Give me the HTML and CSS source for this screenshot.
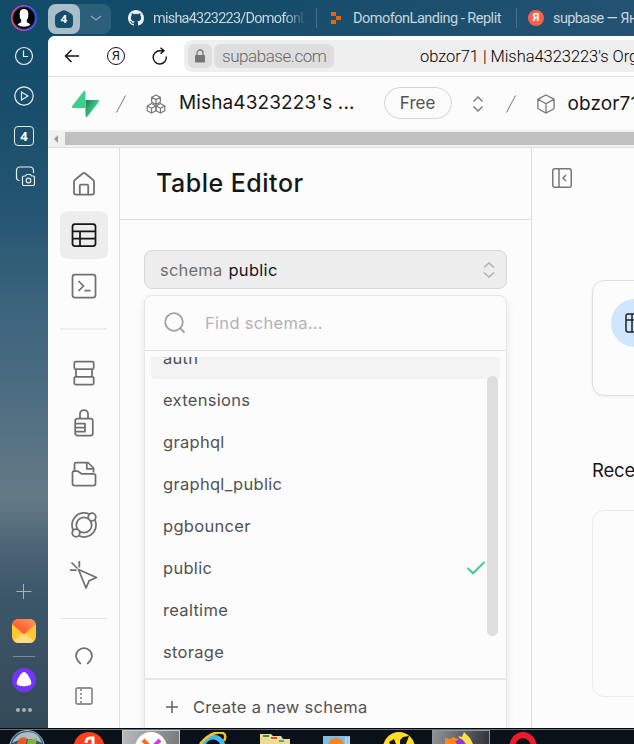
FILE: index.html
```html
<!DOCTYPE html>
<html lang="en">
<head>
<meta charset="utf-8">
<title>obzor71 | Supabase</title>
<link rel="stylesheet" href="styles.css">
</head>
<body>
<div class="browser">
  <aside class="rail">
    <svg class="avatar" width="26" height="26" viewBox="0 0 26 26">
      <defs><linearGradient id="ring"><stop offset="0" stop-color="#f8485f"/><stop offset=".55" stop-color="#a34be0"/><stop offset="1" stop-color="#4a51f5"/></linearGradient></defs>
      <circle cx="13" cy="13" r="12.2" fill="#0b2d4b" stroke="url(#ring)" stroke-width="1.5"/>
      <circle cx="13" cy="13" r="10.3" fill="#000"/>
      <path d="M8.700 8c0-5.500 8.600-5.500 8.600 0v3c0 2-1 3-1.500 4v2c1 1 3 1.300 3.500 2.500-3 3-9.600 3-12.600 0 .5-1.200 2.500-1.500 3.500-2.500v-2C9.700 14 8.700 13 8.700 11z" fill="#fff"/>
    </svg>
    <svg class="r-clock" width="20" height="20" viewBox="0 0 20 20"><circle cx="10" cy="10" r="8.500"/><path d="M9.500 4.500v6h4.500"/></svg>
    <svg class="r-play" width="20" height="20" viewBox="0 0 20 20"><circle cx="10" cy="10" r="9.200"/><path d="M7.500 6v8l6.500-4z"/></svg>
    <div class="r-count">4</div>
    <svg class="r-shot" width="20" height="20" viewBox="0 0 20 20"><path d="M4.500 14.500C2 14.500 1.500 13 1.500 11V5C1.500 2 2.500 1 5 1h10c2.500 0 3.500 1 3.500 4v2"/><path d="M9 10h1.500l1-1.500h4l1 1.500H18c1 0 1.500.5 1.500 1.500V18c0 1-.5 1.500-1.500 1.500H9c-1 0-1.500-.5-1.500-1.500v-6.500C7.500 10.500 8 10 9 10z"/><circle cx="13.500" cy="14.500" r="2.300"/></svg>
    <svg class="r-plus" width="16" height="16" viewBox="0 0 16 16"><path d="M.5 8.500h15M7.500 1v15"/></svg>
    <svg class="r-mail" width="24" height="24" viewBox="0 0 24 24">
      <defs><linearGradient id="m" x1="0" y1="1" x2="1" y2="0"><stop offset="0" stop-color="#ff4316"/><stop offset="1" stop-color="#ff9a62"/></linearGradient><clipPath id="mc"><rect width="24" height="24" rx="6.500"/></clipPath></defs>
      <g clip-path="url(#mc)"><path d="M0 0h24v24H0z" fill="#ffc936"/><path d="M0 24 12 13l12 11z" fill="#ffdc7c"/><path d="M0 0h24v5L12 15.500 0 5z" fill="url(#m)"/></g>
    </svg>
    <div class="r-line"></div>
    <svg class="r-alice" width="24" height="24" viewBox="0 0 24 24"><circle cx="12" cy="12" r="12" fill="#7435fb"/><path d="M12 4c2.700 0 7.300 7.500 7.300 11 0 2.700-4.300 3.200-7.300 3.200S4.700 17.700 4.700 15C4.700 11.500 9.300 4 12 4z" fill="#fff"/></svg>
    <svg class="r-dots" width="16" height="4" viewBox="0 0 16 4"><circle cx="2" cy="2" r="2"/><circle cx="8" cy="2" r="2"/><circle cx="14" cy="2" r="2"/></svg>
  </aside>

  <div class="window">
    <header class="tabs">
      <div class="group"><div class="group-on"><svg width="18" height="18" viewBox="0 0 18 18"><path d="M7 .8Q9-.4 11 .8l4.500 2.400Q18 4.500 18 7v6.500Q18 18 13.500 18h-9Q0 18 0 13.500V7Q0 4.500 2.500 3.200z" fill="#154e6a"/></svg><b>4</b></div>
        <svg class="chev" width="12" height="7" viewBox="0 0 12 7"><path d="M1 1l5 4 5-4"/></svg></div>
      <svg class="gh" width="16" height="16" viewBox="0 0 16 16"><path fill="#edf1f3" d="M8 0C3.580 0 0 3.580 0 8c0 3.540 2.290 6.530 5.470 7.590.4.070.55-.17.55-.38 0-.19-.01-.82-.01-1.490-2.010.37-2.530-.49-2.690-.94-.09-.23-.48-.94-.82-1.130-.28-.15-.68-.52-.01-.53.63-.01 1.080.58 1.230.82.72 1.210 1.870.87 2.330.66.070-.52.28-.87.51-1.070-1.780-.2-3.640-.89-3.640-3.950 0-.87.31-1.590.82-2.150-.08-.2-.36-1.020.08-2.120 0 0 .67-.21 2.200.82a7.600 7.600 0 0 1 4 0c1.530-1.040 2.200-.82 2.200-.82.44 1.100.16 1.920.08 2.120.51.56.82 1.270.82 2.150 0 3.070-1.870 3.750-3.650 3.950.29.25.54.73.54 1.480 0 1.070-.01 1.930-.01 2.200 0 .21.15.46.55.38A8 8 0 0 0 16 8c0-4.420-3.580-8-8-8z"/></svg>
      <span class="tab t1">misha4323223/DomofonL</span>
      <i class="sep"></i>
      <svg class="replit" width="10" height="12" viewBox="0 0 10 12"><path fill="#f26207" d="M0 0h5v4H0zM5 4h5v4H5zM0 8h5v4H0z"/></svg>
      <span class="tab t2">DomofonLanding - Replit</span>
      <i class="sep"></i>
      <span class="ya">Я</span>
      <span class="tab t3">supbase — Ян</span>
    </header>

    <div class="page">
      <div class="toolbar">
        <svg class="back" width="16" height="14" viewBox="0 0 16 14"><path d="M15 7H1.500M7.500 1l-6 6 6 6"/></svg>
        <span class="ya-o">Я</span>
        <svg class="reload" width="16" height="18" viewBox="0 0 16 18"><path d="M14.300 9.500A6.600 6.600 0 1 1 8 3.800h4M8.500.8l3.500 3-3.500 3"/></svg>
        <div class="address">
          <span class="lock"><svg width="12" height="14" viewBox="0 0 12 14"><rect x="1" y="6" width="10" height="7.500" rx="1.200" fill="#777"/><path d="M3 6V4a3 3 0 0 1 6 0v2" fill="none" stroke="#777" stroke-width="1.300"/></svg></span>
          <span class="host">supabase.com</span>
          <span class="doc">obzor71 | Misha4323223's Org</span>
        </div>
      </div>

      <div class="crumbs">
        <svg class="logo" width="27" height="28" viewBox="0 0 27 28"><defs><linearGradient id="lg" x1="0" y1="0" x2="1" y2=".7"><stop offset="0" stop-color="#1f7950"/><stop offset=".7" stop-color="#3ecf8e"/></linearGradient></defs><path fill="url(#lg)" d="M13.500 10H25.500c1.300 0 2 1.200 1.100 2.200L15.500 26.500c-.7.900-2 .4-2-.8z"/><path fill="#3ecf8e" d="M13.500 18H1.500C.2 18-.4 16.800.4 15.800L11.600 1.300c.7-.9 1.900-.4 1.900.7z"/></svg>
        <svg class="slash" width="10" height="18" viewBox="0 0 10 18"><path d="M9.500.5.500 17.500"/></svg>
        <svg class="boxes" width="20" height="20" viewBox="1 1 22 22"><path id="cube" d="M12 2l4.800 2.600v5.300L12 12.500 7.200 9.900V4.600zM7.200 4.600 12 7.200l4.800-2.600M12 7.200v5.300"/><use href="#cube" x="-4.900" y="9.500"/><use href="#cube" x="4.900" y="9.500"/></svg>
        <span class="org">Misha4323223's ...</span>
        <span class="plan">Free</span>
        <svg class="updown" width="12" height="16" viewBox="0 0 12 16"><path d="M1.500 5.500 6 1l4.500 4.500M1.500 10.500 6 15l4.500-4.500"/></svg>
        <svg class="slash s2" width="10" height="18" viewBox="0 0 10 18"><path d="M9.500.5.500 17.500"/></svg>
        <svg class="box" width="18" height="20" viewBox="0 0 18 20"><path d="M9 1l7.500 3.800q.6.400.6 1v8q0 .8-.6 1.200L9 19l-7.500-4q-.6-.4-.6-1.200v-8q0-.6.6-1zM1.200 5.300 9 9.700l7.800-4.400M9 9.700V19"/></svg>
        <span class="proj">obzor71</span>
      </div>
      <div class="hscroll"><i class="arrow"></i><i class="thumb"></i></div>

      <div class="studio">
        <nav class="nav">
          <a><svg width="24" height="24" viewBox="0 0 24 24"><path d="M4 22.500q-2 0-2-2V9.500Q2 8.500 3 7.800L11 1.300q1-.7 2 0l8 6.500q1 .7 1 1.700V20.500q0 2-2 2zM7.800 22.500v-9q0-1 1-1h6.400q1 0 1 1v9"/></svg></a>
          <a class="on"><svg width="26" height="24" viewBox="0 0 26 24"><rect x="1.500" y="1" width="23" height="22" rx="2.500"/><path d="M1.500 8.300h23M1.500 15.500h23M9 8.300V23"/></svg></a>
          <a><svg width="26" height="26" viewBox="0 0 26 26"><rect x="1.500" y="1.500" width="23" height="23" rx="2.500"/><path d="M7.500 8l5 5-5 5M13.500 17.500h6"/></svg></a>
          <hr class="thick">
          <a><svg width="22" height="26" viewBox="0 0 22 26"><rect x="1.300" y="1.500" width="19.400" height="7.700" rx="1.500"/><rect x="1.300" y="16.800" width="19.400" height="7.700" rx="1.500"/><path d="M3 9.200v7.600M19 9.200v7.600"/></svg></a>
          <a><svg width="20" height="28" viewBox="0 0 20 28"><path d="M6 9.500V5a4 4 0 0 1 8 0v4.500"/><rect x="1.200" y="9.500" width="17.600" height="17" rx="2.300"/><path d="M1.200 14.500H11v8.200H1.200M1.200 18.600H11"/></svg></a>
          <a><svg width="26" height="26" viewBox="0 0 26 26"><path d="M3.500 10V3q0-1.500 1.500-1.500h12l5.500 5.500v4.500M15.800 1.500v6.300h6.700"/><path d="M3 10h3.500l4 2.800H22.500q2 0 2 2V22.500q0 2-2 2H3.500q-2 0-2-2V11.500q0-1.500 1.500-1.500z"/></svg></a>
          <a><svg width="28" height="28" viewBox="0 0 28 28"><circle cx="14" cy="14" r="12"/><circle cx="14" cy="14" r="7.700"/><circle cx="22" cy="6" r="3.800" class="bg"/><circle cx="6" cy="22" r="3.800" class="bg"/></svg></a>
          <a><svg width="28" height="28" viewBox="0 0 28 28"><path d="M8.500 8.500 26.500 16.500l-7.300 3.200L16 27zM9.300 0v6.500M0 9.200h6.500M1.500 1.500l6 6"/></svg></a>
          <hr>
          <a class="sm"><svg width="18" height="18" viewBox="0 0 18 18"><path d="M5.800 17C.5 12.500-.3 7.500 3.200 3.700 6.500.2 11.500.2 14.800 3.700c3.500 3.800 2.700 8.800-2.600 13.300"/></svg></a>
          <a class="sm"><svg class="thin" width="18" height="18" viewBox="0 0 18 18"><rect x="1" y="1" width="16" height="16" rx="1.500"/><path d="M6 2v14" stroke-dasharray="2 2"/></svg></a>
        </nav>

        <section class="panel">
          <h1>Table Editor</h1>
          <div class="select"><span class="lbl">schema</span><span class="val">public</span>
            <svg class="updown" width="12" height="16" viewBox="0 0 12 16"><path d="M1 5.500 6 1l5 4.500M1 10.500 6 15l5-4.500"/></svg></div>
          <div class="menu">
            <div class="search"><svg width="22" height="22" viewBox="0 0 22 22"><circle cx="10" cy="10" r="8.800"/><path d="M16.300 16.300 20.500 20.500"/></svg><span>Find schema...</span></div>
            <div class="list">
              <div class="item hover">auth</div>
              <div class="item">extensions</div>
              <div class="item">graphql</div>
              <div class="item">graphql_public</div>
              <div class="item">pgbouncer</div>
              <div class="item">public<svg width="20" height="14" viewBox="0 0 20 14"><path d="M1.500 7 7 12.300 18.500 1"/></svg></div>
              <div class="item">realtime</div>
              <div class="item">storage</div>
              <i class="vthumb"></i>
            </div>
            <div class="create"><svg width="12" height="12" viewBox="0 0 12 12"><path d="M0 6h12M6 0v12"/></svg><span>Create a new schema</span></div>
          </div>
        </section>

        <main class="content">
          <svg class="collapse" width="20" height="20" viewBox="0 0 20 20"><rect x=".8" y=".8" width="18.400" height="18.400" rx="2"/><path d="M7 1v18M14 7l-3 3 3 3"/></svg>
          <div class="card"><div class="bubble"><svg width="20" height="20" viewBox="0 0 20 20"><rect x="1" y="1" width="18" height="18" rx="2"/><path d="M1 7h18M7 1v18"/></svg></div></div>
          <h2>Recent</h2>
          <div class="card empty"></div>
        </main>
      </div>
    </div>
  </div>
</div>

<footer class="taskbar">
  <div class="task"><svg width="36" height="14" viewBox="0 0 36 14"><circle cx="18" cy="18" r="17.500" fill="#37576c" stroke="#8fc4dd"/><path d="M3 13Q7 3 18 2t15 11Q18 5 3 13z" fill="#aebdc5"/><path d="M10 9q4-3 8-.5L17 14H8z" fill="#e75a2b"/><path d="M19 9q5 2 9-1l-1 6h-9z" fill="#84b53b"/></svg></div>
  <div class="task"><svg width="32" height="12" viewBox="0 0 32 12"><circle cx="16" cy="15.500" r="15.500" fill="#fc3f1d"/><path d="M20 12V6h-3q-4 0-4 5" fill="none" stroke="#fff" stroke-width="3"/></svg></div>
  <div class="task active"><svg width="34" height="12" viewBox="0 0 34 12"><circle cx="17" cy="16" r="16" fill="#fff"/><path d="M9 8l7 7" stroke="#ff6a13" stroke-width="4"/><path d="M26 8l-7 7" stroke="#d63ae0" stroke-width="4"/></svg></div>
  <div class="task"><svg width="34" height="12" viewBox="0 0 34 12"><circle cx="17" cy="15" r="10" fill="none" stroke="#44b8ec" stroke-width="5"/><path d="M4 12Q16-2 27 1q4 2 1 8" fill="none" stroke="#f5c526" stroke-width="2.500"/></svg></div>
  <div class="task"><svg width="34" height="10" viewBox="0 0 34 10"><path d="M2 0h11l2 2h8l2 3h7v5H2z" fill="#f0dc91"/><path d="M5 1h6v2H5z" fill="#239b45"/><path d="M13 3h6v2h-6z" fill="#d94c38"/><path d="M21 6h5v2h-5z" fill="#2da6e0"/></svg></div>
  <div class="task"><svg width="28" height="8" viewBox="0 0 28 8"><path d="M0 0h27v8H0z" fill="#81bddf"/><path d="M23 1v7M26 1v7" stroke="#dff2fa"/><circle cx="13" cy="10" r="8" fill="#f48520"/></svg></div>
  <div class="task"><svg width="32" height="12" viewBox="0 0 32 12"><circle cx="16" cy="16" r="16" fill="#ffdc25"/><path d="M6 10l5-3 2 5H7zM17 8l3-3 6-1-3 8h-6z" fill="#161616"/></svg></div>
  <div class="task active"><svg width="34" height="12" viewBox="0 0 34 12"><path d="M1 6l6 1 2-2 5 2 6 5H1z" fill="#ff8618"/><path d="M14 4l4 1 2-5 6 6 3 6h-8z" fill="#ffe04a"/><path d="M11 9l7-2 4 5h-9z" fill="#8d38e8"/></svg></div>
  <div class="task"><svg width="32" height="12" viewBox="0 0 32 12"><ellipse cx="16" cy="16" rx="11" ry="13" fill="none" stroke="#f0182c" stroke-width="6"/></svg></div>
</footer>
</body>
</html>
```
FILE: styles.css
```css
* { box-sizing: border-box; }
body {
  margin: 0; width: 634px; height: 744px; overflow: hidden;
  display: flex; flex-direction: column;
  font-family: Inter, "Liberation Sans", sans-serif; color: #171717;
}
svg { display: block; flex: none; fill: none; }
.browser {
  height: 728px; display: flex;
  background: linear-gradient(90deg, rgba(255,255,255,0) 20%, rgba(90,100,140,.25)) top / 100% 36px no-repeat,
    linear-gradient(#104b68 0, #174e6b 100px, #235471 200px, #3c647d 310px, #506f82 410px, #647986 500px, #4a6374 550px, #3b5669 600px, #3a5264 650px, #344958 728px);
}

/* browser side rail */
.rail { width: 48px; display: flex; flex-direction: column; align-items: center; padding-top: 5px; stroke: #e9f0f3; stroke-width: 1.2; }
.r-clock { margin-top: 15px; }
.r-play { margin-top: 20px; }
.r-count { margin-top: 20px; width: 20px; height: 20px; border: 1.500px solid #e9f0f3; border-radius: 4px; color: #fff; font: bold 13px/18px "Noto Sans", sans-serif; text-align: center; }
.r-shot { margin: 20px 0 0 1px; }
.r-plus { margin-top: 397px; stroke: #a6b3bd; stroke-width: 1; }
.r-mail, .r-alice, .r-dots, .avatar { stroke: none; }
.r-mail { margin-top: 20px; }
.r-line { width: 22px; height: 1px; background: #7d8b96; margin: 13px 0 11px; }
.r-dots { margin-top: 16px; fill: #a5b0b8; }

.window { flex: 1; min-width: 0; display: flex; flex-direction: column; }
.tabs { height: 36px; display: flex; align-items: center; overflow: hidden; font: 14.500px Roboto, sans-serif; color: #c7d5dc; white-space: nowrap; }
.group { width: 63px; height: 30px; border-radius: 8px; background: #2b5f7a; display: flex; align-items: center; margin-top: 1px; flex: none; }
.group-on { width: 32px; height: 30px; border-radius: 8px; background: #a9bec9; display: grid; place-items: center; }
.group-on > * { grid-area: 1 / 1; }
.group-on b { color: #fff; font: bold 11px "Noto Sans", sans-serif; }
.chev { margin-left: 10px; stroke: #8fa9b7; stroke-width: 1.300; }
.gh { margin-left: 17px; }
.tab { flex: none; }
.t1 { width: 153px; margin-left: 9px; letter-spacing: -.78px; -webkit-mask-image: linear-gradient(90deg, #000 86%, transparent); mask-image: linear-gradient(90deg, #000 86%, transparent); }
.t2 { width: 148px; margin-left: 12px; letter-spacing: -.5px; }
.t3 { margin-left: 9px; letter-spacing: -.6px; }
.sep { width: 1px; height: 20px; background: #467089; margin-left: 10px; flex: none; }
.t2 + .sep { margin-left: 15px; }
.replit { margin-left: 14px; }
.ya { width: 16px; height: 16px; border-radius: 50%; margin-left: 11px; background: #f9604b; color: #fff; font: bold 11px/16px Roboto, sans-serif; text-align: center; flex: none; }

.page { flex: 1; min-height: 0; background: #fcfcfc; border-radius: 7px 0 0 0; overflow: hidden; display: flex; flex-direction: column; }
.toolbar { height: 41px; flex: none; border-bottom: 1px solid #dfdfdf; background: #fff; display: flex; align-items: center; padding-left: 16px; }
.back, .reload { stroke: #111; stroke-width: 1.400; }
.ya-o { width: 18px; height: 18px; border: 1.200px solid #111; border-radius: 50%; margin: 0 27px; font: 13px/16px Roboto, sans-serif; text-align: center; flex: none; }
.address { margin-left: 16px; width: 470px; height: 32px; flex: none; border-radius: 8px; background: #efefef; display: flex; align-items: center; padding-left: 4px; font: 300 17px Roboto, sans-serif; white-space: nowrap; }
.lock { width: 24px; height: 24px; border-radius: 6px; background: #dedede; display: grid; place-items: center; flex: none; }
.host { width: 120px; height: 24px; margin-left: 2px; padding-left: 8px; border-radius: 6px; background: #dedede; color: #666; line-height: 24px; flex: none; letter-spacing: -.45px; }
.doc { margin-left: 86px; font-size: 16.500px; color: #000; letter-spacing: -.05px; }

.crumbs { height: 53px; flex: none; display: flex; align-items: center; padding-left: 24px; font-size: 19px; white-space: nowrap; stroke-width: 1.300; }
.crumbs > svg:not(.logo) { stroke: #777; }
.logo { stroke: none; }
.crumbs .slash { margin-left: 17px; stroke: #aaa; stroke-width: 1; }
.boxes { margin-left: 20px; stroke-linejoin: round; }
.org { margin-left: 13px; width: 178px; letter-spacing: .12px; line-height: 24px; margin-top: -1px; }
.plan { margin-left: 29px; width: 68px; height: 32px; border: 1px solid #d4d4d4; border-radius: 16px; color: #555; font-size: 17px; line-height: 30px; text-align: center; flex: none; margin-top: -1px; }
.crumbs .updown { margin-left: 20px; }
.crumbs .s2 { margin-left: 22px; }
.box { margin-left: 21px; }
.proj { margin-left: 13px; margin-top: -1px; letter-spacing: .1px; }

.hscroll { height: 18px; flex: none; background: #f0f0f0; border-bottom: 1px solid #dfdfdf; display: flex; align-items: center; padding-left: 6px; }
.arrow { border: 4px solid transparent; border-right-color: #999; border-left: 0; }
.thumb { flex: 1; height: 13px; margin-left: 7px; background: #c0c0c0; }

.studio { flex: 1; min-height: 0; display: flex; }
.nav { width: 72px; flex: none; border-right: 1px solid #dfdfdf; padding-top: 12.300px; display: flex; flex-direction: column; align-items: center; stroke: #707070; stroke-width: 1.750; stroke-linejoin: round; }
.nav a { width: 48px; height: 48px; flex: none; border-radius: 8px; display: grid; place-items: center; }
.nav a + a { margin-top: 2.700px; }
.nav a.on { background: #ededed; stroke: #171717; }
.nav hr { width: 47px; height: 1px; flex: none; border: 0; background: #e6e6e6; margin: 18.500px 0 17px; }
.nav hr.thick { height: 2px; margin: 18.300px 0 18.700px; background: #ededed; }
.nav a.sm { height: 40px; margin: 0; }
.nav a.sm + a.sm { margin-top: .4px; }
.nav .thin { stroke-width: 1.400; }
.nav .bg { fill: #fcfcfc; }

.panel { width: 412px; flex: none; border-right: 1px solid #dfdfdf; color: #525252; font-size: 16.500px; letter-spacing: .3px; }
h1 { margin: 0; height: 72px; border-bottom: 1px solid #dfdfdf; padding-left: 36px; color: #171717; font-size: 25px; font-weight: 550; line-height: 70px; letter-spacing: .5px; }
.select { margin: 30px 24px 0; height: 39px; border: 1px solid #d9d9d9; border-radius: 8px; background: #ededed; display: flex; align-items: center; padding: 0 11px 0 15px; }
.lbl { color: #707070; letter-spacing: .2px; }
.val { color: #171717; margin-left: 6px; }
.select .updown { margin-left: auto; stroke: #b2b2b2; stroke-width: 1.600; }
.menu { margin: 6px 24px 0; height: 460px; border: 1px solid #e6e6e6; border-radius: 8px; box-shadow: 0 4px 9px rgba(0,0,0,.09); background: #fcfcfc; }
.search { height: 55px; border-bottom: 1px solid #dfdfdf; display: flex; align-items: center; padding-left: 19px; color: #b2b2b2; }
.search svg { stroke: #a0a0a0; stroke-width: 1.800; }
.search span { margin-left: 19px; }
.list { margin: 6px 6px 5px; height: 316px; overflow: hidden; position: relative; }
.item { height: 42px; padding: 0 14px 0 12px; display: flex; align-items: center; }
.item.hover { margin-top: -20px; background: #f3f3f3; border-radius: 3px; }
.item svg { margin-left: auto; stroke: #3ecf8e; stroke-width: 2; }
.vthumb { position: absolute; top: 19px; right: 2px; width: 11px; height: 260px; border-radius: 6px; background: #dedede; }
.create { border-top: 2px solid #e6e6e6; height: 56px; display: flex; align-items: center; padding-left: 21px; stroke: #606060; stroke-width: 1.500; }
.create span { margin-left: 15px; }

.content { flex: 1; min-width: 0; overflow: hidden; padding: 20px 0 0 20px; }
.collapse { stroke: #777; stroke-width: 1.500; }
.card { width: 300px; height: 116px; margin: 92px 0 0 40px; padding: 18px; border: 1px solid #dfdfdf; border-radius: 12px; box-shadow: 0 1px 3px rgba(0,0,0,.06); }
.bubble { width: 48px; height: 48px; border-radius: 50%; background: #cfe6ff; display: grid; place-items: center; stroke: #222; stroke-width: 1.500; }
h2 { margin: 62px 0 0 40px; font-size: 18.500px; line-height: 24px; font-weight: 400; letter-spacing: -.2px; }
.card.empty { height: 187px; margin-top: 28px; border-color: #ececec; box-shadow: none; }

.taskbar { height: 16px; flex: none; background: #0b1118; border-top: 1px solid #05080b; box-shadow: inset 0 1px #68727c; display: flex; padding-top: 1px; overflow: hidden; }
.task { width: 62px; flex: none; display: flex; align-items: flex-end; justify-content: center; }
.task:first-child { margin-left: -4px; }
.task.active { width: 58px; margin: 0 2px; background: linear-gradient(100deg, #b9babb, #77797b); border: 1px solid #c8cacc; border-bottom: 0; }
.task.active ~ .task.active { background: linear-gradient(100deg, #8f9396, #303438); border-color: #8f969c; }
```
